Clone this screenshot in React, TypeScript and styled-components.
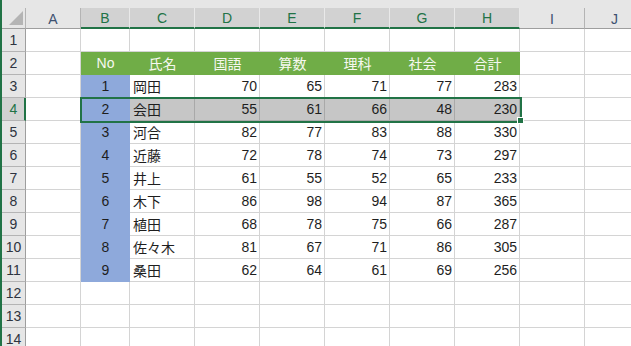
import React from 'react';
import styled, { createGlobalStyle } from 'styled-components';

const GREEN = '#217346';
const GRID = '#d4d4d4';
const HEAD_BG = '#e6e6e6';
const HEAD_SEL = '#d2d2d2';
const HEADER_FILL = '#70ad47';
const NO_FILL = '#8ea9db';
const SEL_SHADE = '#c6c6c6';

const GlobalStyle = createGlobalStyle`
  html, body {
    margin: 0;
    padding: 0;
    background: #ffffff;
  }
  body {
    font-family: "Liberation Sans", "Noto Sans CJK JP", sans-serif;
  }
`;

const Sheet = styled.div`
  position: relative;
  width: 631px;
  height: 346px;
  overflow: hidden;
  box-sizing: border-box;
  border-left: 2px solid ${GREEN};
  background: #ffffff;
  display: flex;
  flex-direction: column;
`;

const TopBand = styled.div`
  flex: none;
  height: 8px;
  background: ${HEAD_BG};
`;

const ColumnHeaders = styled.div`
  flex: none;
  display: flex;
  height: 21px;
  background: ${HEAD_BG};
`;

const Corner = styled.div`
  flex: none;
  width: 24px;
  height: 21px;
  box-sizing: border-box;
  border-right: 1px solid #b4b4b4;
  border-bottom: 1px solid #9e9e9e;
  display: flex;
  align-items: flex-end;
  justify-content: flex-end;
  padding: 0 2px 3px 0;
`;

const CornerTriangle = styled.div`
  width: 0;
  height: 0;
  border-left: 14px solid transparent;
  border-bottom: 14px solid #b4b4b4;
`;

const ColHead = styled.div<{ $w: number; $sel?: boolean }>`
  flex: none;
  width: ${(p) => p.$w}px;
  height: 21px;
  box-sizing: border-box;
  background: ${(p) => (p.$sel ? HEAD_SEL : HEAD_BG)};
  border-right: 1px solid ${(p) => (p.$sel ? '#e9e9e9' : '#b4b4b4')};
  border-bottom: ${(p) => (p.$sel ? `2px solid ${GREEN}` : '1px solid #9e9e9e')};
  display: flex;
  align-items: center;
  justify-content: center;
  font-size: 14px;
  color: ${(p) => (p.$sel ? GREEN : '#3d5170')};
  padding-top: 1px;
`;

const Row = styled.div`
  flex: none;
  display: flex;
  height: 23px;
`;

const RowHead = styled.div<{ $sel?: boolean }>`
  flex: none;
  width: 24px;
  height: 23px;
  box-sizing: border-box;
  background: ${(p) => (p.$sel ? HEAD_SEL : HEAD_BG)};
  border-right: ${(p) => (p.$sel ? `2px solid ${GREEN}` : '1px solid #9e9e9e')};
  border-bottom: 1px solid #b4b4b4;
  display: flex;
  align-items: center;
  justify-content: center;
  font-size: 14px;
  color: ${(p) => (p.$sel ? GREEN : '#2e3440')};
  padding-left: ${(p) => (p.$sel ? '1px' : '0')};
`;

type Align = 'left' | 'right' | 'center';

const Cell = styled.div<{
  $w: number;
  $fill?: string;
  $line?: string;
  $align?: Align;
  $color?: string;
}>`
  flex: none;
  width: ${(p) => p.$w}px;
  height: 23px;
  box-sizing: border-box;
  background: ${(p) => p.$fill ?? '#ffffff'};
  border-right: 1px solid ${(p) => p.$line ?? p.$fill ?? GRID};
  border-bottom: 1px solid ${(p) => p.$line ?? p.$fill ?? GRID};
  display: flex;
  align-items: center;
  justify-content: ${(p) =>
    p.$align === 'right' ? 'flex-end' : p.$align === 'center' ? 'center' : 'flex-start'};
  padding: 0 2px 0 3px;
  font-size: 14px;
  color: ${(p) => p.$color ?? '#1e1e1e'};
  white-space: nowrap;
  overflow: hidden;
`;

const Selection = styled.div`
  position: absolute;
  left: 78px;
  top: 97px;
  width: 442px;
  height: 26px;
  box-sizing: border-box;
  border: 2px solid ${GREEN};
  pointer-events: none;
`;

const FillHandle = styled.div`
  position: absolute;
  left: 515px;
  top: 117px;
  width: 7px;
  height: 7px;
  box-sizing: border-box;
  background: ${GREEN};
  border: 1px solid #ffffff;
`;

const COLS = [
  { key: 'A', w: 55 },
  { key: 'B', w: 49 },
  { key: 'C', w: 65 },
  { key: 'D', w: 65 },
  { key: 'E', w: 65 },
  { key: 'F', w: 65 },
  { key: 'G', w: 65 },
  { key: 'H', w: 65 },
  { key: 'I', w: 65 },
  { key: 'J', w: 60 },
];

const HEADERS = ['No', '氏名', '国語', '算数', '理科', '社会', '合計'];

const DATA: [number, string, number, number, number, number, number][] = [
  [1, '岡田', 70, 65, 71, 77, 283],
  [2, '会田', 55, 61, 66, 48, 230],
  [3, '河合', 82, 77, 83, 88, 330],
  [4, '近藤', 72, 78, 74, 73, 297],
  [5, '井上', 61, 55, 52, 65, 233],
  [6, '木下', 86, 98, 94, 87, 365],
  [7, '植田', 68, 78, 75, 66, 287],
  [8, '佐々木', 81, 67, 71, 86, 305],
  [9, '桑田', 62, 64, 61, 69, 256],
];

const SELECTED_COLS = ['B', 'C', 'D', 'E', 'F', 'G', 'H'];
const ACTIVE_ROW = 4;

function renderCell(rowNo: number, colIdx: number) {
  const col = COLS[colIdx];
  const tableIdx = colIdx - 1; // B = 0
  const inTable = tableIdx >= 0 && tableIdx < 7;

  if (rowNo === 2 && inTable) {
    return (
      <Cell key={col.key} $w={col.w} $fill={HEADER_FILL} $align="center" $color="#f6f8f0">
        {HEADERS[tableIdx]}
      </Cell>
    );
  }

  const dataRow = DATA[rowNo - 3];
  if (dataRow && inTable) {
    const value = dataRow[tableIdx];
    if (tableIdx === 0) {
      return (
        <Cell key={col.key} $w={col.w} $fill={NO_FILL} $align="center">
          {value}
        </Cell>
      );
    }
    const shaded = rowNo === ACTIVE_ROW;
    return (
      <Cell
        key={col.key}
        $w={col.w}
        $fill={shaded ? SEL_SHADE : undefined}
        $line={shaded ? '#a9a9a9' : GRID}
        $align={tableIdx === 1 ? 'left' : 'right'}
      >
        {value}
      </Cell>
    );
  }

  return <Cell key={col.key} $w={col.w} $line={GRID} />;
}

export default function App() {
  const rows = Array.from({ length: 14 }, (_, i) => i + 1);

  return (
    <>
      <GlobalStyle />
      <Sheet>
        <TopBand />
        <ColumnHeaders>
          <Corner>
            <CornerTriangle />
          </Corner>
          {COLS.map((c) => (
            <ColHead key={c.key} $w={c.w} $sel={SELECTED_COLS.includes(c.key)}>
              {c.key}
            </ColHead>
          ))}
        </ColumnHeaders>
        {rows.map((r) => (
          <Row key={r}>
            <RowHead $sel={r === ACTIVE_ROW}>{r}</RowHead>
            {COLS.map((_, ci) => renderCell(r, ci))}
          </Row>
        ))}
        <Selection />
        <FillHandle />
      </Sheet>
    </>
  );
}
